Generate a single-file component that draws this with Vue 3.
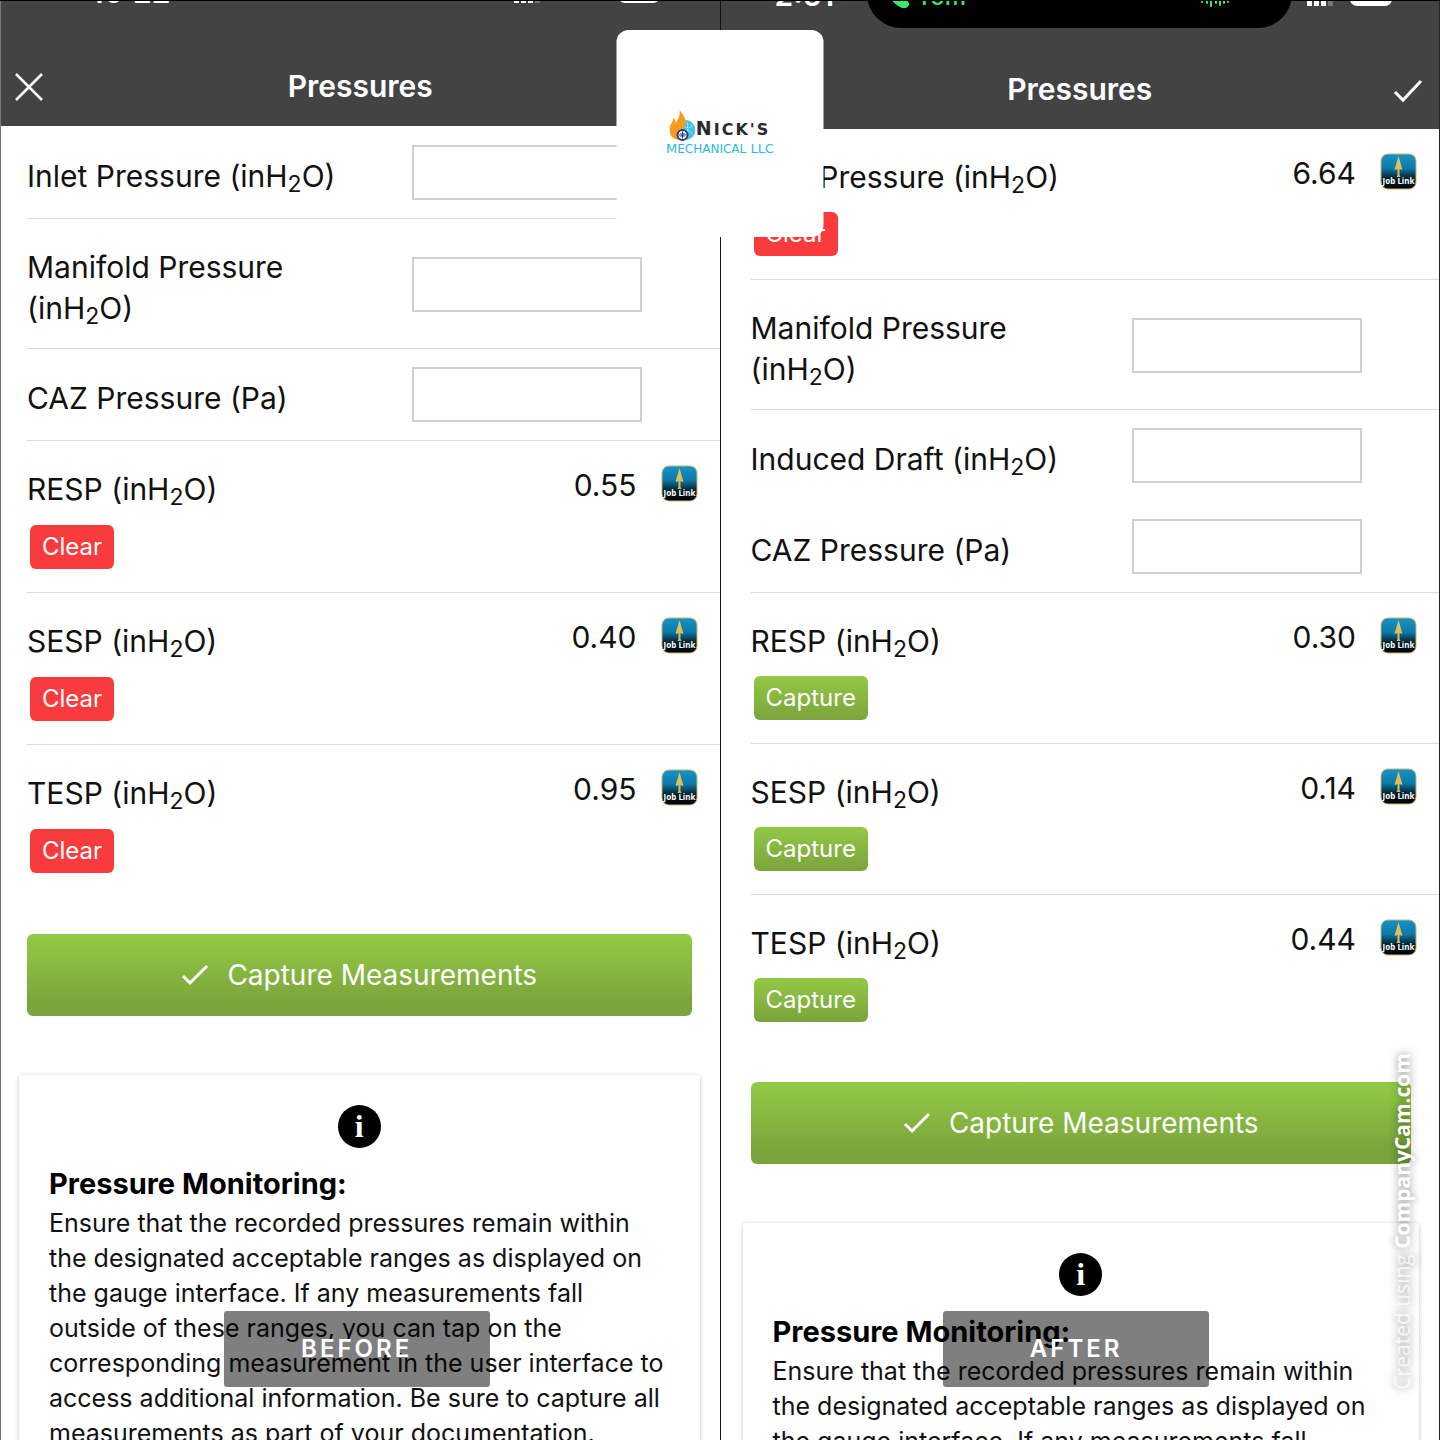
<script setup>
import { reactive } from 'vue'

const panels = reactive([
  {
    id: 'before',
    tag: 'BEFORE',
    time: '10:22',
    closable: true,
    rows: [
      { key: 'inlet', name: 'Inlet Pressure', unit: 'h2o', input: '' },
      { key: 'manifold', name: 'Manifold Pressure', unit: 'h2o', input: '', tall: true },
      { key: 'caz', name: 'CAZ Pressure', unit: 'pa', input: '' },
      { key: 'resp', name: 'RESP', unit: 'h2o', value: '0.55', action: 'Clear' },
      { key: 'sesp', name: 'SESP', unit: 'h2o', value: '0.40', action: 'Clear' },
      { key: 'tesp', name: 'TESP', unit: 'h2o', value: '0.95', action: 'Clear', plain: true },
    ],
  },
  {
    id: 'after',
    tag: 'AFTER',
    time: '2:51',
    call: 'Tom',
    rows: [
      { key: 'inlet', name: 'Inlet Pressure', unit: 'h2o', value: '6.64', action: 'Clear' },
      { key: 'manifold', name: 'Manifold Pressure', unit: 'h2o', input: '', tall: true },
      { key: 'draft', name: 'Induced Draft', unit: 'h2o', input: '', plain: true },
      { key: 'caz', name: 'CAZ Pressure', unit: 'pa', input: '' },
      { key: 'resp', name: 'RESP', unit: 'h2o', value: '0.30', action: 'Capture' },
      { key: 'sesp', name: 'SESP', unit: 'h2o', value: '0.14', action: 'Capture' },
      { key: 'tesp', name: 'TESP', unit: 'h2o', value: '0.44', action: 'Capture', plain: true },
    ],
  },
])

function toggle(row) {
  row.action = row.action === 'Clear' ? 'Capture' : 'Clear'
}
</script>

<template>
  <main class="collage">
    <section v-for="panel in panels" :key="panel.id" class="panel" :class="panel.id">
      <header>
        <div class="status">
          <span class="time">{{ panel.time }}</span>
          <div v-if="panel.call" class="island">
            <svg class="phone" width="24" height="24" viewBox="0 0 24 24" aria-hidden="true">
              <path
                d="M5 1c2-1 4 3 4 5 0 1-2 2-1 4s3 4 5 5c2 0 2-2 4-1 2 0 6 4 5 6-2 4-6 4-9 2C7 19 2 13 1 8c0-3 1-6 4-7z"
                fill="#3fe56a"
              />
            </svg>
            <span>{{ panel.call }}</span>
            <svg class="wave" width="30" height="24" viewBox="0 0 30 24" aria-hidden="true">
              <path
                d="M2 7v10M7 6v12M11 3v18M16 6v12M20 4v16M24 6v12M28 7v10"
                stroke="#3fe56a"
                stroke-width="2"
                stroke-linecap="round"
              />
            </svg>
          </div>
          <svg class="signal" width="26" height="16" viewBox="0 0 26 16" aria-hidden="true">
            <path d="M0 10h5v6H0zM7 7h5v9H7zM14 4h5v12h-5z" fill="#fff" />
            <path d="M21 0h5v16h-5z" fill="#777" />
          </svg>
          <span class="battery"></span>
        </div>
        <div class="nav">
          <button v-if="panel.closable" type="button" aria-label="Close" class="nav-close">
            <svg width="28" height="28" viewBox="0 0 28 28" aria-hidden="true">
              <path d="M1 1l26 26M27 1L1 27" fill="none" stroke="#fff" stroke-width="2.500" />
            </svg>
          </button>
          <h1>Pressures</h1>
          <button v-if="!panel.closable" type="button" aria-label="Done" class="nav-done">
            <svg width="30" height="24" viewBox="0 0 30 24" aria-hidden="true">
              <path d="M2 13l8 8L28 2" fill="none" stroke="#fff" stroke-width="3" />
            </svg>
          </button>
        </div>
      </header>

      <div class="rows">
        <div
          v-for="row in panel.rows"
          :key="row.key"
          class="row"
          :class="{ tall: row.tall, plain: row.plain, reading: row.value }"
        >
          <div class="line">
            <label :for="`${panel.id}-${row.key}`">
              {{ row.name }}
              <br v-if="row.tall" />
              <template v-if="row.unit === 'h2o'">(inH<sub>2</sub>O)</template>
              <template v-else>(Pa)</template>
            </label>
            <template v-if="row.value">
              <output :id="`${panel.id}-${row.key}`">{{ row.value }}</output>
              <svg class="joblink" width="37" height="37" viewBox="0 0 37 37" role="img" aria-label="Job Link">
                <defs>
                  <linearGradient :id="`jl-${panel.id}-${row.key}`" x1="0" y1="0" x2="0" y2="1">
                    <stop offset="0" stop-color="#1593c8" />
                    <stop offset="0.4" stop-color="#0e7aa9" />
                    <stop offset="0.7" stop-color="#04202d" />
                    <stop offset="1" stop-color="#000" />
                  </linearGradient>
                </defs>
                <rect
                  x="1"
                  y="1"
                  width="35"
                  height="35"
                  rx="7"
                  :fill="`url(#jl-${panel.id}-${row.key})`"
                  stroke="#c9b56c"
                />
                <path d="M18.500 3L22.500 17l-3-1v6l1 2h-4l1-2v-6l-3 1z" fill="#e3bd55" />
                <text x="18.500" y="31" text-anchor="middle">Job Link</text>
              </svg>
            </template>
            <input v-else :id="`${panel.id}-${row.key}`" v-model="row.input" type="text" inputmode="decimal" />
          </div>
          <button
            v-if="row.value"
            type="button"
            class="action"
            :class="row.action.toLowerCase()"
            @click="toggle(row)"
          >
            {{ row.action }}
          </button>
        </div>
      </div>

      <button type="button" class="capture-all">
        <svg width="28" height="22" viewBox="0 0 28 22" aria-hidden="true">
          <path d="M2 12l7 7L26 2" fill="none" stroke="#fff" stroke-width="3" />
        </svg>
        Capture Measurements
      </button>

      <article class="info">
        <span class="info-icon">i</span>
        <h2>Pressure Monitoring:</h2>
        <p>
          Ensure that the recorded pressures remain within the designated acceptable ranges as displayed on the
          gauge interface. If any measurements fall outside of these ranges, you can tap on the corresponding
          measurement in the user interface to access additional information. Be sure to capture all measurements
          as part of your documentation.
        </p>
      </article>

      <div class="tag">{{ panel.tag }}</div>
    </section>

    <div class="brand">
      <div class="brand-top">
        <svg width="26" height="34" viewBox="0 0 26 34" aria-hidden="true">
          <circle cx="16" cy="20" r="10" fill="#45c3e6" />
          <path
            d="M18 13v13M13 15l10 9M23 15l-10 9"
            stroke="#c9effa"
            stroke-width="1"
            stroke-dasharray="2 1"
          />
          <path
            d="M10 0c4 5 7 9 6 14-1 3-3 4-2 7l-3 9C4 30 0 26 0 20c0-5 3-7 4-12 2 1 2 3 2 5 3-4 5-8 4-13z"
            fill="#f99a1c"
          />
          <circle cx="13" cy="25" r="5" fill="#fff" stroke="#1f3f7c" stroke-width="2" />
          <path d="M13 21.500v7M9.500 25h7M11 23l4 4M15 23l-4 4" stroke="#1f3f7c" stroke-width="1" />
        </svg>
        <span>N<small>ICK'S</small></span>
      </div>
      <div class="brand-sub">M<small>ECHANICAL</small> LLC</div>
    </div>

    <div class="watermark">Created using <b>CompanyCam.com</b></div>
  </main>
</template>

<style>
body {
  background: #fff;
}
</style>

<style scoped>
.collage {
  position: relative;
  display: flex;
  box-sizing: border-box;
  height: 100vh;
  overflow: hidden;
  border-top: 1px solid #000;
  background: #fff;
  color: #111;
  font-family: Inter, 'Liberation Sans', sans-serif;
}
button {
  padding: 0;
  border: 0;
  background: none;
  color: #fff;
  font: inherit;
  cursor: pointer;
}
.panel {
  --inset: 26px;
  --gap: 15px;
  position: relative;
  box-sizing: border-box;
  min-width: 0;
  flex: 1;
  border-left: 1px solid #777;
}
.panel.after {
  --inset: 30px;
  --gap: 14px;
  border-right: 1px solid #222;
  border-left-color: #111;
}

header {
  background: #434343;
}
.status {
  position: relative;
  height: 45px;
  overflow: hidden;
}
.after .status {
  height: 48px;
}
.time,
.signal,
.battery,
.island {
  position: absolute;
}
.time {
  top: -29px;
  left: 90px;
  color: #fff;
  font-size: 30px;
  font-weight: 600;
  line-height: 40px;
}
.signal {
  top: -14px;
  right: 180px;
}
.battery {
  top: -18px;
  right: 60px;
  width: 42px;
  height: 20px;
  border-radius: 7px;
  background: #fff;
}
.after .time {
  top: -26px;
  left: 54px;
}
.after .signal {
  top: -11px;
  right: 106px;
}
.after .battery {
  top: -15px;
  right: 47px;
}
.island {
  top: -50px;
  right: 147px;
  left: 146px;
  display: flex;
  box-sizing: border-box;
  height: 77px;
  align-items: center;
  padding: 14px 62px 0 20px;
  border-radius: 34px;
  background: #000;
  color: #3fe56a;
  font-size: 24px;
  font-weight: 500;
  line-height: 28px;
}
.island span {
  margin-left: 6px;
}
.island .wave {
  margin-left: auto;
}
.nav {
  position: relative;
  display: flex;
  height: 80px;
  align-items: center;
  justify-content: center;
}
.nav h1 {
  margin: 0;
  color: #fff;
  font-size: 30px;
  font-weight: 600;
}
.nav svg {
  display: block;
}
.nav-close {
  position: absolute;
  top: 27px;
  left: 14px;
}
.nav-done {
  position: absolute;
  top: 30px;
  right: 16px;
}

.rows {
  margin-left: var(--inset);
  font-size: 30px;
  line-height: 41px;
}
.before .rows {
  padding: 1px 0;
}
.row {
  padding: 18px 0;
  border-bottom: 1px solid #dcdcdc;
}
.row.plain {
  border-bottom: 0;
}
.row.tall {
  padding: 20px 0 19px;
}
.row.reading {
  padding: 24px 0 23px;
}
.line {
  display: flex;
  align-items: center;
  justify-content: space-between;
  padding-right: 78px;
}
.after .line {
  padding-right: 77px;
}
.line label {
  padding-top: 8px;
}
.line sub {
  font-size: 23px;
  line-height: 0;
  vertical-align: -5px;
}
.line input {
  box-sizing: border-box;
  width: 230px;
  height: 55px;
  padding: 0 12px;
  border: 2px solid #cfcfcf;
  border-radius: 0;
  background: #fff;
  color: inherit;
  font: inherit;
}
.panel .reading .line {
  align-items: flex-start;
  padding-right: 22px;
}
.reading label {
  flex: 1;
  padding-top: 4px;
}
.joblink {
  margin-left: 24px;
}
.joblink text {
  fill: #fff;
  font-family: 'Noto Sans', sans-serif;
  font-size: 8px;
  font-weight: 700;
}
.action {
  display: block;
  height: 44px;
  margin: var(--gap) 0 0 3px;
  padding: 0 12px;
  border-radius: 6px;
  font-size: 24px;
  line-height: 44px;
}
.action.clear {
  background: #f93b3e;
}
.action.capture {
  background: linear-gradient(#92c846, #7ba43c);
}

.capture-all {
  display: flex;
  width: calc(100% - var(--inset) - 28px);
  height: 82px;
  align-items: center;
  justify-content: center;
  gap: 18px;
  margin: 37px 0 0 var(--inset);
  border-radius: 6px;
  background: linear-gradient(#93cb44, #7ba43c 85%);
  font-size: 28px;
}

.info {
  margin: 59px 20px 0 calc(var(--inset) - 8px);
  padding: 30px;
  border-radius: 3px;
  box-shadow: 0 1px 4px rgba(0, 0, 0, 0.25);
}
.info-icon {
  display: block;
  width: 43px;
  height: 43px;
  margin: 0 auto;
  border-radius: 50%;
  background: #000;
  color: #fff;
  font-family: 'Liberation Serif', serif;
  font-size: 32px;
  font-weight: 700;
  line-height: 43px;
  text-align: center;
}
.info h2 {
  margin: 17px 0 3px;
  color: #000;
  font-size: 29px;
  font-weight: 700;
  line-height: 38px;
}
.info p {
  margin: 0;
  font-size: 25px;
  line-height: 35px;
}

.tag {
  position: absolute;
  bottom: 53px;
  left: 31%;
  width: 37%;
  border-radius: 3px;
  background: rgba(0, 0, 0, 0.5);
  color: #fff;
  font-size: 24px;
  font-weight: 600;
  letter-spacing: 3px;
  line-height: 76px;
  text-align: center;
}

.brand {
  position: absolute;
  top: 29px;
  left: 50%;
  display: flex;
  box-sizing: border-box;
  width: 207px;
  height: 207px;
  flex-direction: column;
  align-items: center;
  justify-content: center;
  padding-bottom: 4px;
  border-radius: 12px;
  background: #fff;
  font-family: 'DejaVu Sans', sans-serif;
  transform: translateX(-50%);
}
.brand-top {
  display: flex;
  align-items: flex-end;
  color: #2b2b2b;
  font-size: 19px;
  font-weight: 700;
  letter-spacing: 2px;
  line-height: 28px;
}
.brand-top small {
  font-size: 16px;
}
.brand-sub {
  color: #2cb9dc;
  font-size: 13px;
  line-height: 10px;
}
.brand-sub small {
  font-size: 12px;
}

.watermark {
  position: absolute;
  right: 26px;
  bottom: 50px;
  color: rgba(255, 255, 255, 0.8);
  font-family: 'Open Sans', sans-serif;
  font-size: 21px;
  line-height: 24px;
  text-shadow: 0 0 8px rgba(0, 0, 0, 0.5);
  transform: rotate(180deg);
  writing-mode: vertical-rl;
}
.watermark b {
  color: #fff;
  font-weight: 700;
}
</style>
